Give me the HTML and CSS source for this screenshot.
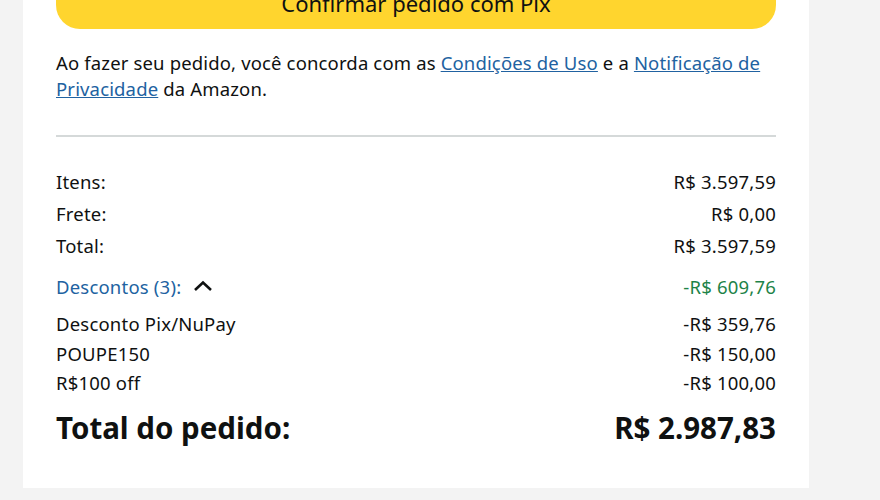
FILE: index.html
```html
<!DOCTYPE html>
<html>
<head>
    <link rel="stylesheet" href="styles.css">
</head>
<body>
    <div class="card">
        <button class="botaoPix">Confirmar pedido com Pix</button>

        <p class="aviso">Ao fazer seu pedido, você concorda com as <a href="#">Condições de Uso</a> e a <a href="#">Notificação de Privacidade</a> da Amazon.</p>

        <hr class="divisor">

        <div class="resumo">
            <div class="linha"><span>Itens:</span><span>R$ 3.597,59</span></div>
            <div class="linha"><span>Frete:</span><span>R$ 0,00</span></div>
            <div class="linha"><span>Total:</span><span>R$ 3.597,59</span></div>

            <div class="linha descontos">
                <span class="descontosLabel">Descontos (3):
                    <svg class="seta" width="20" height="14" viewBox="0 0 20 14"><path d="M2 11 L10 3.5 L18 11" fill="none" stroke="#0f1111" stroke-width="2.6"/></svg>
                </span>
                <span class="verde">-R$ 609,76</span>
            </div>

            <div class="listaDescontos">
                <div class="linha"><span>Desconto Pix/NuPay</span><span>-R$ 359,76</span></div>
                <div class="linha"><span>POUPE150</span><span>-R$ 150,00</span></div>
                <div class="linha"><span>R$100 off</span><span>-R$ 100,00</span></div>
            </div>

            <div class="linha totalPedido"><span>Total do pedido:</span><span>R$ 2.987,83</span></div>
        </div>
    </div>
</body>
</html>
```

FILE: styles.css
```css
body {
    font-family: 'Noto Sans', 'Open Sans', sans-serif;
    background-color: #f3f3f3;
    margin: 0;
    padding: 0;
    color: #0f1111;
    overflow: hidden;
}
.card {
    width: 720px;
    margin-left: 23px;
    padding: 0 33px 42px 33px;
    background: #ffffff;
}
.botaoPix {
    display: block;
    width: 100%;
    height: 52px;
    margin-top: -23px;
    background-color: #ffd52e;
    border: none;
    border-radius: 24px;
    font-family: inherit;
    font-size: 22px;
    color: #0f1111;
    padding: 0;
}
.aviso {
    font-size: 18.5px;
    line-height: 26px;
    letter-spacing: 0.15px;
    margin: 21px 0 0 0;
}
.aviso a {
    color: #2162a1;
    text-decoration: underline;
}
.divisor {
    border: none;
    border-top: 2px solid #d5d9d9;
    margin: 33px 0 0 0;
}
.resumo {
    padding-top: 28px;
    font-size: 18.5px;
    letter-spacing: 0.2px;
}
.linha {
    display: flex;
    justify-content: space-between;
    align-items: center;
    height: 32px;
}
.descontos {
    margin-top: 9px;
}
.descontosLabel {
    color: #2162a1;
    display: flex;
    align-items: center;
    gap: 12px;
}
.verde {
    color: #1d8348;
}
.listaDescontos {
    margin-top: 7px;
}
.listaDescontos .linha {
    height: 29.5px;
}
.totalPedido {
    margin-top: 12px;
    font-size: 29.5px;
    font-weight: bold;
    letter-spacing: 0;
    height: 36px;
}
```
